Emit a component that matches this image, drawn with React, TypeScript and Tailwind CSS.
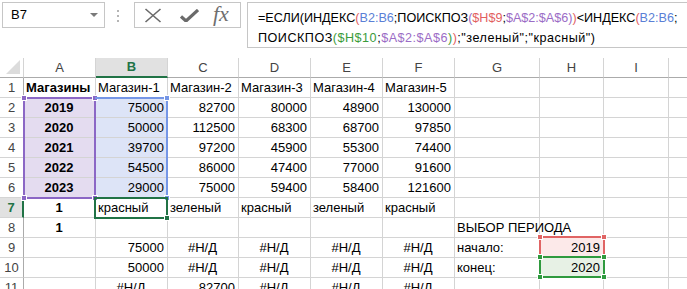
import React from "react";

type Cell = { t?: string; a?: "l" | "c" | "r"; b?: boolean; bg?: string };

const colWidths = [
  "w-[72px]",
  "w-[72px]",
  "w-[71px]",
  "w-[72px]",
  "w-[72px]",
  "w-[72px]",
  "w-[85px]",
  "w-[64px]",
  "w-[65px]",
];
const letters = ["A", "B", "C", "D", "E", "F", "G", "H", "I"];

const years = ["2019", "2020", "2021", "2022", "2023"];
const sales = [
  ["75000", "82700", "80000", "48900", "130000"],
  ["50000", "112500", "68300", "68700", "97850"],
  ["39700", "97200", "45900", "55300", "74400"],
  ["54500", "86000", "47400", "77000", "91600"],
  ["29000", "75000", "59400", "58400", "121600"],
];

const na: Cell = { t: "#Н/Д", a: "c" };

const rows: Cell[][] = [
  [
    { t: "Магазины", a: "l", b: true },
    { t: "Магазин-1" },
    { t: "Магазин-2" },
    { t: "Магазин-3" },
    { t: "Магазин-4" },
    { t: "Магазин-5" },
  ],
  ...years.map((y, i) => [
    { t: y, a: "c" as const, b: true, bg: "bg-[#e4dcf0]" },
    { t: sales[i][0], a: "r" as const, bg: "bg-[#dde4f7]" },
    ...sales[i].slice(1).map((v) => ({ t: v, a: "r" as const })),
  ]),
  [
    { t: "1", a: "c", b: true },
    { t: "красный" },
    { t: "зеленый" },
    { t: "красный" },
    { t: "зеленый" },
    { t: "красный" },
  ],
  [{ t: "1", a: "c", b: true }, {}, {}, {}, {}, {}, { t: "ВЫБОР ПЕРИОДА" }],
  [
    {},
    { t: "75000", a: "r" },
    na,
    na,
    na,
    na,
    { t: "начало:" },
    { t: "2019", a: "r", bg: "bg-[#fce9e9]" },
  ],
  [
    {},
    { t: "50000", a: "r" },
    na,
    na,
    na,
    na,
    { t: "конец:" },
    { t: "2020", a: "r", bg: "bg-[#e7f1e5]" },
  ],
  [{}, na, { t: "82700", a: "r" }, na, na, na],
];

function Handle({ className }: { className: string }) {
  return <div className={`absolute w-[6px] h-[6px] border border-white ${className}`} />;
}

function FormulaBar() {
  return (
    <div className="flex h-[58px] items-start bg-white">
      <div className="ml-[2px] mt-[2px] w-[103px] h-[26px] border border-[#c6c6c6] flex items-center pl-[8px] pr-[6px] text-[13px] text-black">
        <span className="flex-1">B7</span>
        <svg width="8" height="4" viewBox="0 0 8 4">
          <path d="M0 0h8L4 4z" fill="#7a7a7a" />
        </svg>
      </div>
      <div className="ml-[12px] mt-[10px] flex flex-col gap-[3px]">
        <div className="w-[2px] h-[2px] bg-[#b5b5b5]" />
        <div className="w-[2px] h-[2px] bg-[#b5b5b5]" />
        <div className="w-[2px] h-[2px] bg-[#b5b5b5]" />
      </div>
      <div className="ml-[15px] mt-[2px] w-[107px] h-[26px] border border-[#c6c6c6] flex items-center pl-[9px]">
        <svg width="18" height="15" viewBox="0 0 18 15">
          <path d="M1.5 1l15 13M16.5 1l-15 13" stroke="#6a6a6a" strokeWidth="1.6" fill="none" />
        </svg>
        <svg className="ml-[18px]" width="19" height="13" viewBox="0 0 19 13">
          <path d="M1 7.5l5 4.5L18 1" stroke="#6a6a6a" strokeWidth="3.2" fill="none" />
        </svg>
        <span className="ml-[14px] font-['Liberation_Serif',serif] italic text-[22px] leading-none text-[#6f6f6f] -mt-[3px]">
          fx
        </span>
      </div>
      <div className="ml-[6px] mt-[2px] flex-1 h-[46px] border border-r-0 border-[#c6c6c6] pl-[10px] pt-[5px] text-[12.6px] leading-[20px] text-black whitespace-nowrap overflow-hidden">
        <div>
          =ЕСЛИ(ИНДЕКС<span className="text-[#e2605f]">(</span>
          <span className="text-[#5a7fd6]">B2:B6</span>;ПОИСКПОЗ
          <span className="text-[#9b6cc6]">(</span>
          <span className="text-[#e2605f]">$H$9</span>;
          <span className="text-[#9b6cc6]">$A$2:$A$6)</span>
          <span className="text-[#e2605f]">)</span>&lt;ИНДЕКС
          <span className="text-[#e2605f]">(</span>
          <span className="text-[#5a7fd6]">B2:B6</span>;
        </div>
        <div className="tracking-[0.5px]">
          ПОИСКПОЗ<span className="text-[#3b9b3b]">(</span>
          <span className="text-[#3b9b3b]">$H$10</span>;
          <span className="text-[#9b6cc6]">$A$2:$A$6</span>
          <span className="text-[#3b9b3b]">)</span>
          <span className="text-[#e2605f]">)</span>;"зеленый";"красный")
        </div>
      </div>
    </div>
  );
}

export default function App() {
  return (
    <div className="w-[687px] h-[289px] overflow-hidden bg-white font-['Liberation_Sans',Arial,sans-serif] text-[13px] text-black">
      <FormulaBar />
      <div className="relative">
        {/* column headers */}
        <div className="flex h-[20px] text-[#444]">
          <div className="w-[24px] shrink-0 h-full border-r border-b border-r-[#d4d4d4] border-b-[#ababab] flex items-end justify-end p-[3px]">
            <svg width="14" height="14" viewBox="0 0 14 14">
              <path d="M14 0V14H0z" fill="#dcdcdc" />
            </svg>
          </div>
          {letters.map((l, i) =>
            l === "B" ? (
              <div
                key={l}
                className={`${colWidths[i]} shrink-0 h-full bg-[#e1e1e1] border-r border-r-[#d4d4d4] border-b-2 border-b-[#217346] flex items-center justify-center font-bold text-[#217346]`}
              >
                {l}
              </div>
            ) : (
              <div
                key={l}
                className={`${colWidths[i]} shrink-0 h-full border-r border-b border-r-[#d4d4d4] border-b-[#ababab] flex items-center justify-center`}
              >
                {l}
              </div>
            )
          )}
          <div className="flex-1 h-full border-b border-b-[#ababab]" />
        </div>

        {/* rows */}
        {rows.map((row, r) => {
          const sel = r === 6;
          return (
            <div key={r} className="flex h-[20px]">
              <div
                className={
                  sel
                    ? "w-[24px] shrink-0 h-full bg-[#e1e1e1] border-r-2 border-b border-r-[#217346] border-b-[#d4d4d4] flex items-center justify-center font-bold text-[#217346]"
                    : "w-[24px] shrink-0 h-full border-r border-b border-r-[#ababab] border-b-[#d4d4d4] flex items-center justify-center text-[#444]"
                }
              >
                {r + 1}
              </div>
              {colWidths.map((w, c) => {
                const cell = row[c] ?? {};
                const align =
                  cell.a === "r" ? "justify-end" : cell.a === "c" ? "justify-center" : "justify-start";
                return (
                  <div
                    key={c}
                    className={`${w} shrink-0 h-full border-r border-b border-[#d4d4d4] flex items-center px-[2px] pt-[1px] whitespace-nowrap ${align} ${
                      cell.b ? "font-bold" : ""
                    } ${cell.bg ?? ""}`}
                  >
                    {cell.t && <span className={cell.a === "l" || !cell.a ? "" : "pr-[1px]"}>{cell.t}</span>}
                  </div>
                );
              })}
              <div className="flex-1 h-full border-b border-[#d4d4d4]" />
            </div>
          );
        })}

        {/* range finder: A2:A6 */}
        <div className="absolute left-[23px] top-[39px] w-[73px] h-[102px] border-2 border-[#8b67c5]">
          <Handle className="-left-[4px] -top-[4px] bg-[#8b67c5]" />
          <Handle className="-right-[4px] -top-[4px] bg-[#8b67c5]" />
          <Handle className="-left-[4px] -bottom-[4px] bg-[#8b67c5]" />
        </div>
        {/* range finder: B2:B6 */}
        <div className="absolute left-[95px] top-[39px] w-[73px] h-[102px] border-2 border-l-0 border-[#7596e6]">
          <Handle className="-right-[4px] -top-[4px] bg-[#7596e6]" />
          <Handle className="-right-[4px] -bottom-[4px] bg-[#7596e6]" />
        </div>
        <Handle className="left-[92px] top-[137px] bg-[#8b67c5]" />
        {/* active cell B7 */}
        <div className="absolute left-[94px] top-[139px] w-[74px] h-[22px] border-2 border-[#217346]">
          <Handle className="-right-[4px] -bottom-[4px] bg-[#217346]" />
        </div>
        {/* H9 / H10 */}
        <div className="absolute left-[539px] top-[178px] w-[66px] h-[22px] border-2 border-[#e06464]">
          <Handle className="-left-[4px] -top-[4px] bg-[#e06464]" />
          <Handle className="-right-[4px] -top-[4px] bg-[#e06464]" />
        </div>
        <div className="absolute left-[539px] top-[198px] w-[66px] h-[22px] border-2 border-[#2f9a3e]">
          <Handle className="-left-[4px] -top-[4px] bg-[#2f9a3e]" />
          <Handle className="-right-[4px] -top-[4px] bg-[#2f9a3e]" />
          <Handle className="-left-[4px] -bottom-[4px] bg-[#2f9a3e]" />
          <Handle className="-right-[4px] -bottom-[4px] bg-[#2f9a3e]" />
        </div>
      </div>
    </div>
  );
}
